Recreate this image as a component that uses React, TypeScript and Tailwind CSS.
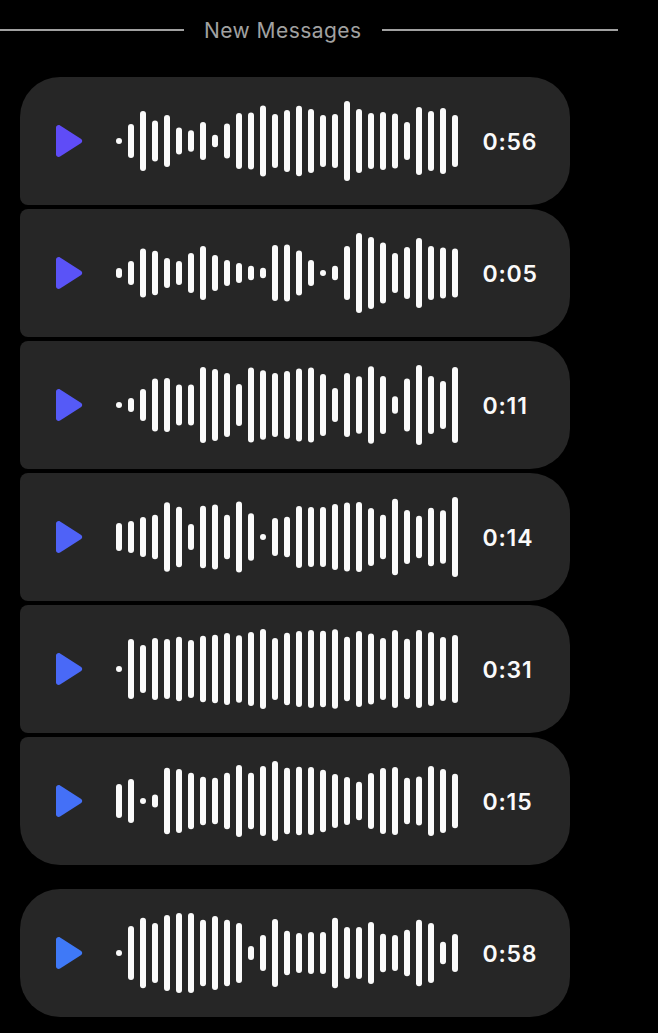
import React from "react";

type VoiceMessage = {
  id: number;
  duration: string;
  accent: string;
  corners: string;
  levels: number[];
};

const groups: VoiceMessage[][] = [
  [
    {
      id: 1,
      duration: "0:56",
      accent: "text-[#5f4cf7]",
      corners: "rounded-tl-[40px] rounded-bl-lg",
      levels: [
        6, 34, 60, 41, 52, 27, 21.5, 38, 12.5, 35, 56, 57, 71, 54, 62, 70.5, 64,
        52, 54, 80, 64, 56, 58, 55, 38, 68, 60, 66, 52,
      ],
    },
    {
      id: 2,
      duration: "0:05",
      accent: "text-[#5a53f7]",
      corners: "rounded-l-lg",
      levels: [
        10, 24, 49, 44.5, 30, 24, 40, 54, 36, 26, 20, 14.5, 10.5, 56, 57, 45, 26,
        6, 14.5, 54, 80, 72, 61, 40, 52, 70, 54, 51, 49,
      ],
    },
    {
      id: 3,
      duration: "0:11",
      accent: "text-[#555af7]",
      corners: "rounded-l-lg",
      levels: [
        6, 14, 32, 53, 54, 41, 41, 76, 72, 64, 42, 75, 69.5, 64, 68, 73, 75, 62,
        34, 64, 57.5, 77.5, 58, 17.5, 53, 80, 58, 48, 76,
      ],
    },
    {
      id: 4,
      duration: "0:14",
      accent: "text-[#4f62f7]",
      corners: "rounded-l-lg",
      levels: [
        28, 32, 40, 44.5, 69.5, 60.5, 26, 62.5, 65, 44.5, 71, 47.5, 6, 38, 40.5,
        62, 60, 60, 66, 69, 70, 58, 44.5, 76.5, 54, 42.5, 58.5, 53.5, 80,
      ],
    },
    {
      id: 5,
      duration: "0:31",
      accent: "text-[#4969f7]",
      corners: "rounded-l-lg",
      levels: [
        6, 60, 48, 62, 60, 64.5, 58, 66.5, 68.5, 72, 67.5, 74, 80, 62, 72.5, 76,
        78, 76.5, 79.5, 64.5, 76, 71, 62, 78, 60.5, 78, 74, 64, 68,
      ],
    },
    {
      id: 6,
      duration: "0:15",
      accent: "text-[#4470f7]",
      corners: "rounded-tl-lg rounded-bl-[40px]",
      levels: [
        34, 44, 6, 13, 66.5, 64, 56.5, 48.5, 46.5, 56.5, 72, 56.5, 70, 80, 66.5,
        68.5, 68, 62.5, 54, 48, 38.5, 56, 66, 68, 46.5, 49, 70, 64, 54.5,
      ],
    },
  ],
  [
    {
      id: 7,
      duration: "0:58",
      accent: "text-[#3f79f7]",
      corners: "rounded-l-[40px]",
      levels: [
        6, 54, 70.5, 60, 76, 80, 80, 66.5, 74, 66.5, 60, 14, 36, 68, 44.5, 40,
        42, 42, 70.5, 52, 52, 62, 38.5, 36, 46.5, 66.5, 60, 22.5, 38,
      ],
    },
  ],
];

const Waveform: React.FC<{ levels: number[] }> = ({ levels }) => (
  <svg width={342} height={80} className="shrink-0 fill-neutral-50">
    {levels.map((level, i) => (
      <rect
        key={i}
        x={i * 12}
        y={40 - level / 2}
        width={6}
        height={level}
        rx={3}
      />
    ))}
  </svg>
);

const VoiceBubble: React.FC<{ message: VoiceMessage }> = ({ message }) => (
  <div
    className={`flex h-32 w-[550px] items-center rounded-r-[40px] bg-neutral-800 pl-9 ${message.corners}`}
  >
    <button
      aria-label="Play"
      className={`mr-[33px] shrink-0 cursor-pointer ${message.accent}`}
    >
      <svg width={27} height={32} viewBox="0 0 27 32" fill="currentColor">
        <path d="M0 2.6C0 .6 2.4-.6 4.1.5L25.2 14Q27.2 16 25.2 18L4.1 31.5C2.4 32.6 0 31.4 0 29.4Z" />
      </svg>
    </button>
    <Waveform levels={message.levels} />
    <span className="ml-[24.5px] pt-0.5 text-[23px] font-semibold tracking-[0.8px] text-neutral-50">
      {message.duration}
    </span>
  </div>
);

const App: React.FC = () => {
  return (
    <div className="min-h-screen bg-black font-['Inter',sans-serif]">
      {/* Divider */}
      <div className="flex h-[60px] w-[618px] items-center gap-5">
        <div className="h-0.5 w-[184px] bg-neutral-400" />
        <span className="w-[158px] whitespace-nowrap pt-0.5 text-[21px] tracking-[0.45px] text-neutral-400">
          New Messages
        </span>
        <div className="h-0.5 flex-1 bg-neutral-400" />
      </div>

      {/* Voice messages */}
      <div className="flex flex-col gap-6 pt-[17px] pl-5">
        {groups.map((group, i) => (
          <div key={i} className="flex flex-col gap-1">
            {group.map((message) => (
              <VoiceBubble key={message.id} message={message} />
            ))}
          </div>
        ))}
      </div>
    </div>
  );
};

export default App;
